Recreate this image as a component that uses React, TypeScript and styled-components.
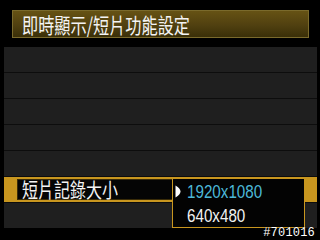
import styled, { createGlobalStyle } from 'styled-components'

const GlobalStyle = createGlobalStyle`
    html, body {
        margin: 0;
        padding: 0;
        background: #000;
    }
`

const cjk = `'Noto Sans CJK TC', 'Noto Sans CJK JP', sans-serif`

const Screen = styled.div`
    position: relative;
    width: 320px;
    height: 240px;
    background: #000;
    padding-top: 10px;
    box-sizing: border-box;
    overflow: hidden;
    display: flex;
    flex-direction: column;
`

const TitleBar = styled.div`
    margin: 0 11px 0 12px;
    height: 28px;
    box-sizing: border-box;
    border: 1px solid #7a6a2c;
    background: linear-gradient(#665214, #504010 55%, #3a2f08);
    display: flex;
    align-items: center;
    padding-left: 9px;
`

const Squeezed = styled.span<{ size: number; scale: number }>`
    display: inline-block;
    white-space: nowrap;
    font-size: ${({ size }) => size}px;
    line-height: 1;
    transform: scaleX(${({ scale }) => scale});
    transform-origin: left center;
`

const TitleText = styled(Squeezed)`
    font-family: ${cjk};
    color: #f4f4f4;
`

const List = styled.div`
    margin: 9px 0 0 4px;
    width: 313px;
    display: flex;
    flex-direction: column;
    gap: 1px;
    background: #0d0d0d;
`

const Row = styled.div`
    height: 25px;
    background: #1f1f1f;
`

const SelectedRow = styled.div`
    position: relative;
    height: 25px;
    background: #c8961f;
    padding: 2px 0 0 13px;
    box-sizing: border-box;
`

const LabelBox = styled.div`
    width: 156px;
    height: 21px;
    background: #050505;
    box-shadow: inset 0 0 0 1px #3a2c08;
    display: flex;
    align-items: center;
    padding-left: 5px;
    box-sizing: border-box;
`

const LabelText = styled(Squeezed)`
    font-family: ${cjk};
    color: #f4f4f4;
`

const Dropdown = styled.div`
    position: absolute;
    left: 168px;
    top: 1px;
    width: 133px;
    height: 50px;
    box-sizing: border-box;
    border: 1px solid #c8961f;
    background: #030303;
    display: flex;
    flex-direction: column;
    z-index: 2;
`

const Option = styled.div`
    height: 24px;
    display: flex;
    align-items: center;
    padding-left: 2px;
`

const Marker = styled.svg`
    width: 6px;
    height: 13px;
    margin-right: 6px;
    flex: none;
`

const OptionText = styled(Squeezed)<{ active?: boolean }>`
    font-family: 'Liberation Sans', Arial, sans-serif;
    color: ${({ active }) => (active ? '#4cb8d8' : '#f2f2f2')};
`

const Spacer = styled.span`
    display: inline-block;
    width: 12px;
`

const Watermark = styled.div`
    position: absolute;
    right: 5px;
    bottom: 1px;
    font-family: 'Liberation Mono', 'DejaVu Sans Mono', monospace;
    font-size: 12px;
    line-height: 1;
    color: #ffffff;
    text-shadow: 0 0 1px #000;
    letter-spacing: 0.2px;
    z-index: 3;
`

export default function App() {
    return (
        <>
            <GlobalStyle />
            <Screen>
                <TitleBar>
                    <TitleText size={21} scale={0.77}>
                        即時顯示/短片功能設定
                    </TitleText>
                </TitleBar>
                <List>
                    <Row />
                    <Row />
                    <Row />
                    <Row />
                    <Row />
                    <SelectedRow>
                        <LabelBox>
                            <LabelText size={20} scale={0.8}>
                                短片記錄大小
                            </LabelText>
                        </LabelBox>
                        <Dropdown>
                            <Option>
                                <Marker viewBox="0 0 6 13">
                                    <path d="M0.5 0.5 Q5.5 3.5 5.5 6.5 Q5.5 9.5 0.5 12.5 Z" fill="#fff" />
                                </Marker>
                                <OptionText size={19} scale={0.8} active>
                                    1920x1080
                                </OptionText>
                            </Option>
                            <Option>
                                <Spacer />
                                <OptionText size={19} scale={0.8}>
                                    640x480
                                </OptionText>
                            </Option>
                        </Dropdown>
                    </SelectedRow>
                    <Row />
                </List>
                <Watermark>#701016</Watermark>
            </Screen>
        </>
    )
}
